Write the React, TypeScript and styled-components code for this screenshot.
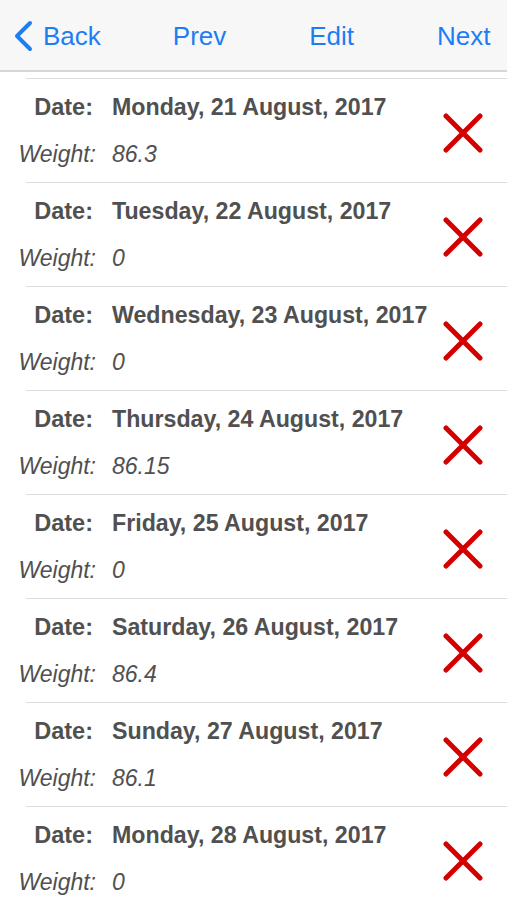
import React from "react";
import styled, { createGlobalStyle } from "styled-components";

const entries = [
  { date: "Monday, 21 August, 2017", weight: "86.3" },
  { date: "Tuesday, 22 August, 2017", weight: "0" },
  { date: "Wednesday, 23 August, 2017", weight: "0" },
  { date: "Thursday, 24 August, 2017", weight: "86.15" },
  { date: "Friday, 25 August, 2017", weight: "0" },
  { date: "Saturday, 26 August, 2017", weight: "86.4" },
  { date: "Sunday, 27 August, 2017", weight: "86.1" },
  { date: "Monday, 28 August, 2017", weight: "0" },
];

const GlobalStyle = createGlobalStyle`
  html, body {
    margin: 0;
    padding: 0;
    background: #ffffff;
    font-family: "Liberation Sans", Arial, sans-serif;
  }
`;

const Screen = styled.div`
  width: 507px;
  height: 900px;
  overflow: hidden;
  background: #ffffff;
  font-family: "Liberation Sans", Arial, sans-serif;
`;

const NavBar = styled.div`
  display: flex;
  align-items: center;
  height: 70px;
  padding: 0 13px;
  background: #f7f7f7;
  border-bottom: 2px solid #d6d6d6;
`;

const NavButton = styled.span<{ $gap?: number }>`
  display: flex;
  align-items: center;
  gap: 10px;
  margin-left: ${(p) => p.$gap ?? 0}px;
  font-size: 26px;
  color: #1d7ef3;
  margin-top: 2px;
`;

const List = styled.div`
  padding-top: 6px;
`;

const Row = styled.div`
  display: flex;
  align-items: center;
  height: 103px;
  margin-left: 26px;
  border-top: 1.5px solid #dcdcdc;
`;

const Fields = styled.div`
  flex: 1;
  min-width: 0;
  display: grid;
  grid-template-columns: 80px auto;
  column-gap: 16px;
  row-gap: 20px;
  margin-left: -10px;
`;

const Label = styled.span<{ $italic?: boolean }>`
  justify-self: end;
  font-size: ${(p) => (p.$italic ? 23 : 23.5)}px;
  color: #505050;
  font-weight: ${(p) => (p.$italic ? "normal" : "bold")};
  font-style: ${(p) => (p.$italic ? "italic" : "normal")};
  margin-right: ${(p) => (p.$italic ? 0 : 3)}px;
`;

const Value = styled.span<{ $italic?: boolean }>`
  font-size: ${(p) => (p.$italic ? 23 : 23.2)}px;
  color: #505050;
  font-weight: ${(p) => (p.$italic ? "normal" : "bold")};
  font-style: ${(p) => (p.$italic ? "italic" : "normal")};
  white-space: nowrap;
`;

const Delete = styled.div`
  flex-shrink: 0;
  width: 88px;
  display: flex;
  justify-content: center;
  padding-top: 4px;
`;

const Chevron = () => (
  <svg width="20" height="32" viewBox="0 0 20 32">
    <path d="M17 3 L4 16 L17 29" fill="none" stroke="#1d7ef3" strokeWidth="4" strokeLinecap="round" strokeLinejoin="round" />
  </svg>
);

const Cross = () => (
  <svg width="40" height="40" viewBox="0 0 40 40">
    <path d="M3 3 L37 37 M37 3 L3 37" stroke="#d40000" strokeWidth="5" strokeLinecap="round" />
  </svg>
);

export default function App() {
  return (
    <Screen>
      <GlobalStyle />
      <NavBar>
        <NavButton>
          <Chevron />
          Back
        </NavButton>
        <NavButton $gap={72}>Prev</NavButton>
        <NavButton $gap={83}>Edit</NavButton>
        <NavButton $gap={83}>Next</NavButton>
      </NavBar>
      <List>
        {entries.map((e) => (
          <Row key={e.date}>
            <Fields>
              <Label>Date:</Label>
              <Value>{e.date}</Value>
              <Label $italic>Weight:</Label>
              <Value $italic>{e.weight}</Value>
            </Fields>
            <Delete>
              <Cross />
            </Delete>
          </Row>
        ))}
      </List>
    </Screen>
  );
}
